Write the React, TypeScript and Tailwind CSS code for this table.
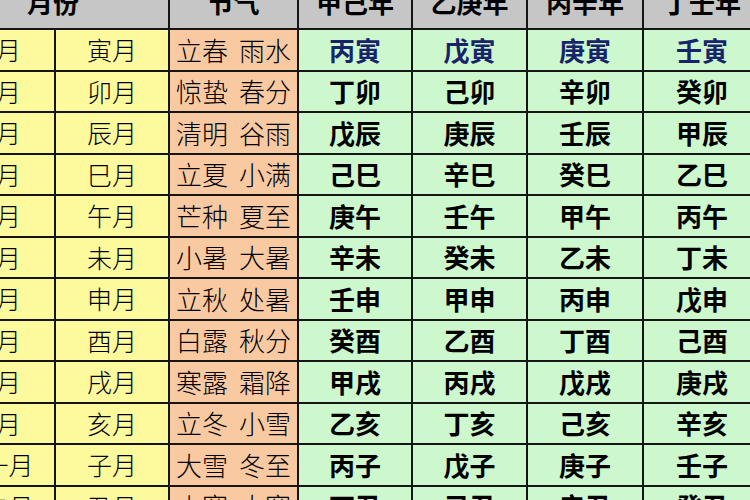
import React from 'react';

// 月份 / 节气 / 年干 对照表 (cropped view)
const ROWS: { month: string; branch: string; terms: [string, string]; gz: string[] }[] = [
  { month: '正月', branch: '寅月', terms: ['立春', '雨水'], gz: ['丙寅', '戊寅', '庚寅', '壬寅'] },
  { month: '二月', branch: '卯月', terms: ['惊蛰', '春分'], gz: ['丁卯', '己卯', '辛卯', '癸卯'] },
  { month: '三月', branch: '辰月', terms: ['清明', '谷雨'], gz: ['戊辰', '庚辰', '壬辰', '甲辰'] },
  { month: '四月', branch: '巳月', terms: ['立夏', '小满'], gz: ['己巳', '辛巳', '癸巳', '乙巳'] },
  { month: '五月', branch: '午月', terms: ['芒种', '夏至'], gz: ['庚午', '壬午', '甲午', '丙午'] },
  { month: '六月', branch: '未月', terms: ['小暑', '大暑'], gz: ['辛未', '癸未', '乙未', '丁未'] },
  { month: '七月', branch: '申月', terms: ['立秋', '处暑'], gz: ['壬申', '甲申', '丙申', '戊申'] },
  { month: '八月', branch: '酉月', terms: ['白露', '秋分'], gz: ['癸酉', '乙酉', '丁酉', '己酉'] },
  { month: '九月', branch: '戌月', terms: ['寒露', '霜降'], gz: ['甲戌', '丙戌', '戊戌', '庚戌'] },
  { month: '十月', branch: '亥月', terms: ['立冬', '小雪'], gz: ['乙亥', '丁亥', '己亥', '辛亥'] },
  { month: '十一月', branch: '子月', terms: ['大雪', '冬至'], gz: ['丙子', '戊子', '庚子', '壬子'] },
  { month: '十二月', branch: '丑月', terms: ['小寒', '大寒'], gz: ['丁丑', '己丑', '辛丑', '癸丑'] },
];

const HEADERS = ['甲己年', '乙庚年', '丙辛年', '丁壬年'];

export default function App() {
  return (
    <div
      className="w-[750px] h-[500px] overflow-hidden bg-white"
      style={{ fontFamily: '"Noto Sans CJK SC", "Noto Sans", sans-serif' }}
    >
      <div className="-ml-[62px] -mt-[13px] w-[830px] grid grid-cols-[116px_112px_127px_112px_113px_114px_116px] grid-rows-[41px] auto-rows-[39.5px] gap-[2px] bg-[#151515] text-black">
        {/* header */}
        <div className="col-span-2 bg-[#c6c6c6] flex items-start justify-center pt-[2px] text-[26px] leading-none font-bold">
          月份
        </div>
        <div className="bg-[#c6c6c6] flex items-start justify-center pt-[2px] text-[26px] leading-none font-bold">
          节气
        </div>
        {HEADERS.map(h => (
          <div key={h} className="bg-[#c6c6c6] flex items-start justify-center pt-[2px] text-[26px] leading-none font-bold">
            {h}
          </div>
        ))}

        {ROWS.map((r, i) => (
          <React.Fragment key={r.branch}>
            <div className="bg-[#fdfa9e] flex items-center justify-center text-[25px] leading-none font-light">
              {r.month}
            </div>
            <div className="bg-[#fdfa9e] flex items-center justify-center text-[25px] leading-none font-light">
              {r.branch}
            </div>
            <div className="bg-[#f9c9a2] flex items-center justify-center gap-[11px] text-[26px] leading-none font-light">
              <span>{r.terms[0]}</span>
              <span>{r.terms[1]}</span>
            </div>
            {r.gz.map(g => (
              <div
                key={g}
                className={
                  'bg-[#cdf7cd] flex items-center justify-center text-[26px] leading-none font-bold ' +
                  (i === 0 ? 'text-[#17246a]' : 'text-black')
                }
              >
                {g}
              </div>
            ))}
          </React.Fragment>
        ))}
      </div>
    </div>
  );
}
